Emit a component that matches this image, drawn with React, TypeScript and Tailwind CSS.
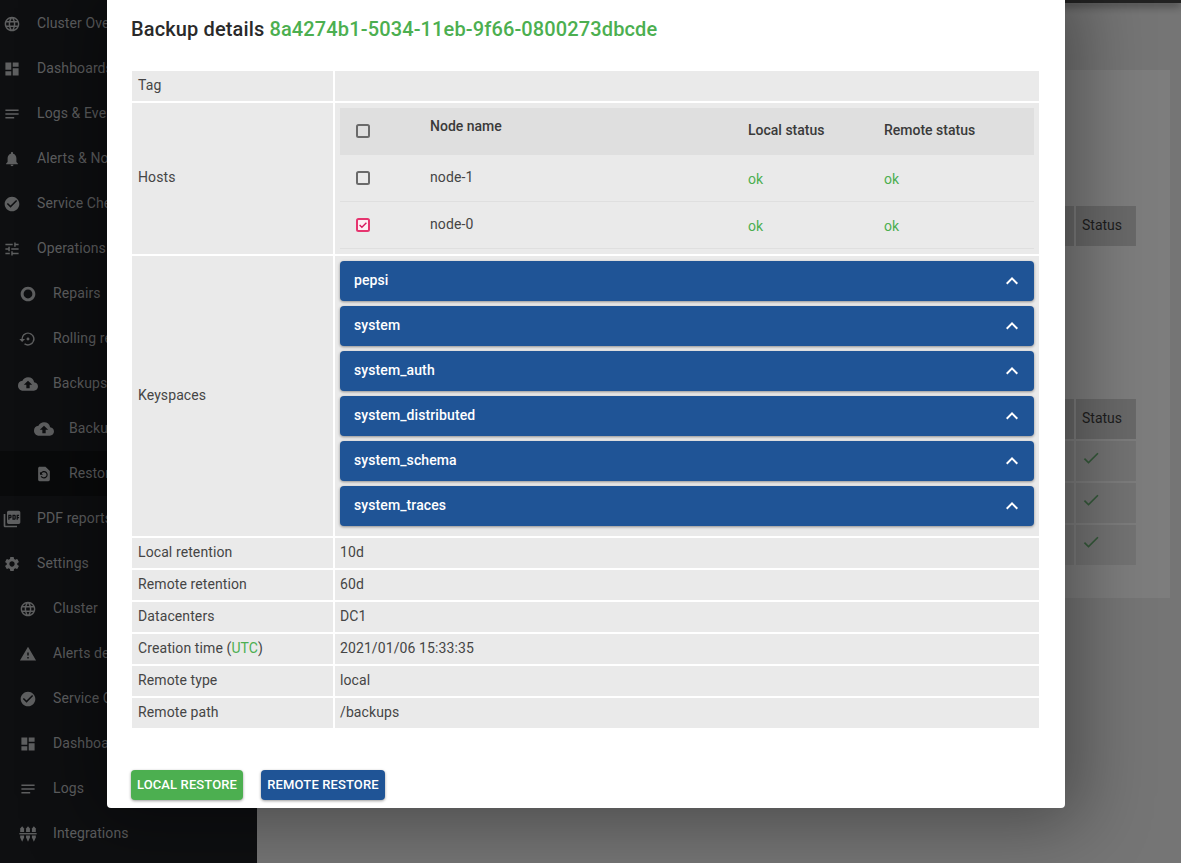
import {
  MdBackup,
  MdCheckCircle,
  MdDashboard,
  MdExpandLess,
  MdLanguage,
  MdNotes,
  MdNotifications,
  MdPictureAsPdf,
  MdRestorePage,
  MdSettings,
  MdSettingsBackupRestore,
  MdTripOrigin,
  MdTune,
  MdWarning,
  MdCheck,
} from "react-icons/md";
import type { ComponentType } from "react";

function IntegrationsIcon({ className }: { className?: string }) {
  return (
    <svg viewBox="0 0 18 16" fill="currentColor" className={className}>
      <rect x="0" y="7" width="18" height="1.4" />
      {[1, 7, 13].map((x) => (
        <g key={x}>
          <path d={`M${x + 2} 0l2 2.5v3.5h-4v-3.5z`} />
          <path d={`M${x} 9.5h4v2l-2 4.5l-2-4.5z`} />
        </g>
      ))}
    </svg>
  );
}

function Checkbox({ checked }: { checked?: boolean }) {
  return (
    <svg viewBox="0 0 14 14" fill="none" className="h-[14px] w-[14px]">
      <rect
        x="1"
        y="1"
        width="12"
        height="12"
        rx="1.5"
        strokeWidth="2"
        stroke={checked ? "#e6356f" : "#6a6a6a"}
        fill={checked ? "#fdf0f4" : "none"}
      />
      {checked && <path d="M3.6 7l2.3 2.3l4.5-4.6" stroke="#d81b60" strokeWidth="1.4" />}
    </svg>
  );
}

const menu: {
  label: string;
  icon: ComponentType<{ className?: string }>;
  level: number;
  active?: boolean;
  iconClass?: string;
}[] = [
  { label: "Cluster Overview", icon: MdLanguage, level: 0 },
  { label: "Dashboards", icon: MdDashboard, level: 0 },
  { label: "Logs & Events", icon: MdNotes, level: 0 },
  { label: "Alerts & Notifications", icon: MdNotifications, level: 0 },
  { label: "Service Checks", icon: MdCheckCircle, level: 0 },
  { label: "Operations", icon: MdTune, level: 0 },
  { label: "Repairs", icon: MdTripOrigin, level: 1 },
  { label: "Rolling restart", icon: MdSettingsBackupRestore, level: 1 },
  { label: "Backups", icon: MdBackup, level: 1, iconClass: "scale-125" },
  { label: "Backup", icon: MdBackup, level: 2, iconClass: "scale-125" },
  { label: "Restore", icon: MdRestorePage, level: 2, active: true },
  { label: "PDF reports", icon: MdPictureAsPdf, level: 0, iconClass: "scale-125" },
  { label: "Settings", icon: MdSettings, level: 0 },
  { label: "Cluster", icon: MdLanguage, level: 1 },
  { label: "Alerts delivery", icon: MdWarning, level: 1 },
  { label: "Service Checks", icon: MdCheckCircle, level: 1 },
  { label: "Dashboards", icon: MdDashboard, level: 1 },
  { label: "Logs", icon: MdNotes, level: 1 },
  { label: "Integrations", icon: IntegrationsIcon, level: 1 },
];

const keyspaces = ["pepsi", "system", "system_auth", "system_distributed", "system_schema", "system_traces"];

const details: { label: React.ReactNode; value: string }[] = [
  { label: "Local retention", value: "10d" },
  { label: "Remote retention", value: "60d" },
  { label: "Datacenters", value: "DC1" },
  {
    label: (
      <>
        Creation time (<span className="text-[#4caf50]">UTC</span>)
      </>
    ),
    value: "2021/01/06 15:33:35",
  },
  { label: "Remote type", value: "local" },
  { label: "Remote path", value: "/backups" },
];

function Sidebar() {
  return (
    <aside className="h-[863px] w-[257px] shrink-0 overflow-hidden bg-[#0e0f11] pt-[1px] text-[#5e5f60]">
      {menu.map((item, i) => {
        const Icon = item.icon;
        const pad = item.level === 0 ? "pl-[4px]" : item.level === 1 ? "pl-[20px]" : "pl-[36px]";
        return (
          <div key={i} className={`flex h-[45px] items-center ${pad} ${item.active ? "bg-[#090a0b]" : ""}`}>
            <Icon className={`h-[16px] w-[16px] shrink-0 ${item.iconClass ?? "scale-110"}`} />
            <span className="ml-[17px] whitespace-nowrap text-[14px] tracking-[0.1px]">{item.label}</span>
          </div>
        );
      })}
    </aside>
  );
}

function BehindRow({ head, top }: { head?: boolean; top: string }) {
  const bg = head ? "bg-[#696969]" : "bg-[#737373]";
  return (
    <div className={`-ml-[12px] flex h-[40px] gap-[2px] ${top}`}>
      <div className={`w-[10px] ${bg}`} />
      {head ? (
        <div className={`flex w-[60px] items-center pb-[2px] pl-[6px] text-[14px] text-[#1d1d1d] ${bg}`}>Status</div>
      ) : (
        <div className={`w-[60px] pl-[5px] pt-[7px] text-[#35593a] ${bg}`}>
          <MdCheck className="h-[20px] w-[20px]" />
        </div>
      )}
    </div>
  );
}

function BehindPanel() {
  return (
    <main className="h-[863px] flex-1 bg-[#757575] pl-[100px] pt-[70px]">
      <div className="h-[528px] w-[813px] bg-[#7d7d7d] pl-[719px] pt-[136px]">
        <BehindRow head top="mt-0" />
        <BehindRow head top="mt-[153px]" />
        <BehindRow top="mt-[2px]" />
        <BehindRow top="mt-[2px]" />
        <BehindRow top="mt-[2px]" />
      </div>
    </main>
  );
}

function HostRow({ name, checked }: { name: string; checked?: boolean }) {
  return (
    <tr className="h-[47px]">
      <td className="pb-[1px] pl-[16px]">
        <Checkbox checked={checked} />
      </td>
      <td className="pb-[1px]">{name}</td>
      <td className="pt-[3px] text-[#4caf50]">ok</td>
      <td className="pt-[3px] text-[#4caf50]">ok</td>
    </tr>
  );
}

function Modal() {
  return (
    <div className="absolute left-[107px] top-0 h-[808px] w-[958px] rounded-b-[4px] bg-white pl-[24px] pr-[24px] pt-[16px] shadow-[0_0_70px_15px_rgba(0,0,0,0.36)]">
      <h2 className="text-[20px] font-medium leading-[26px] tracking-[0.13px] text-[#2a2a2a]">
        Backup details <span className="text-[#4caf50]">8a4274b1-5034-11eb-9f66-0800273dbcde</span>
      </h2>
      <table className="-ml-[1px] mt-[27px] w-[911px] table-fixed border-separate border-spacing-[2px] text-[14px] tracking-[0.1px] text-[#454545]">
        <colgroup>
          <col className="w-[201px]" />
          <col />
        </colgroup>
        <tbody>
          <tr>
            <td className="h-[30px] bg-[#eaeaea] px-[6px] pb-[2px]">Tag</td>
            <td className="bg-[#eaeaea]"></td>
          </tr>
          <tr>
            <td className="h-[151px] bg-[#eaeaea] px-[6px] pb-[2px]">Hosts</td>
            <td className="bg-[#eaeaea] px-[5px] align-top pt-[5px]">
              <table className="w-full table-fixed border-separate border-spacing-0">
                <colgroup>
                  <col className="w-[90px]" />
                  <col className="w-[318px]" />
                  <col className="w-[136px]" />
                  <col />
                </colgroup>
                <thead>
                  <tr className="h-[47px] bg-[#dfdfdf] text-left font-normal">
                    <th className="pb-[2px] pl-[16px] font-normal">
                      <Checkbox />
                    </th>
                    <th className="pb-[10px] font-medium tracking-normal text-[#3a3a3a]">Node name</th>
                    <th className="pb-[2px] font-medium tracking-normal text-[#3a3a3a]">Local status</th>
                    <th className="pb-[2px] font-medium tracking-normal text-[#3a3a3a]">Remote status</th>
                  </tr>
                </thead>
                <tbody className="[&_td]:border-b [&_td]:border-[#dfdfdf]">
                  <HostRow name="node-1" />
                  <HostRow name="node-0" checked />
                </tbody>
              </table>
            </td>
          </tr>
          <tr>
            <td className="h-[280px] bg-[#eaeaea] px-[6px] pb-[2px]">Keyspaces</td>
            <td className="bg-[#eaeaea] px-[5px] pb-[5px]">
              <div className="flex flex-col gap-[5px]">
                {keyspaces.map((k) => (
                  <div
                    key={k}
                    className="flex h-[40px] items-center justify-between rounded-[4px] bg-[#1f5496] pl-[14px] pr-[10px] font-medium text-white shadow-[0_1px_3px_rgba(0,0,0,0.4)]"
                  >
                    <span className="pb-[2px]">{k}</span>
                    <MdExpandLess className="h-[24px] w-[24px]" />
                  </div>
                ))}
              </div>
            </td>
          </tr>
          {details.map((d, i) => (
            <tr key={i}>
              <td className="h-[30px] bg-[#eaeaea] px-[6px] pb-[2px]">{d.label}</td>
              <td className="bg-[#eaeaea] px-[5px] pb-[2px]">{d.value}</td>
            </tr>
          ))}
        </tbody>
      </table>
      <div className="mt-[40px] flex gap-[18px] text-[13px] font-medium tracking-[0.12px]">
        <button
          type="button"
          className="h-[30px] w-[112px] rounded-[4px] bg-[#4caf50] text-white shadow-[0_1px_3px_rgba(0,0,0,0.4)]"
        >
          LOCAL RESTORE
        </button>
        <button
          type="button"
          className="h-[30px] w-[124px] rounded-[4px] bg-[#1f5496] text-white shadow-[0_1px_3px_rgba(0,0,0,0.4)]"
        >
          REMOTE RESTORE
        </button>
      </div>
    </div>
  );
}

export default function App() {
  return (
    <div className="relative flex h-[863px] overflow-hidden font-['Roboto',sans-serif]">
      <Sidebar />
      <BehindPanel />
      <div className="absolute left-[257px] right-0 top-0 h-[3px] bg-[#222] shadow-[0_2px_8px_rgba(0,0,0,0.8)]" />
      <Modal />
    </div>
  );
}
